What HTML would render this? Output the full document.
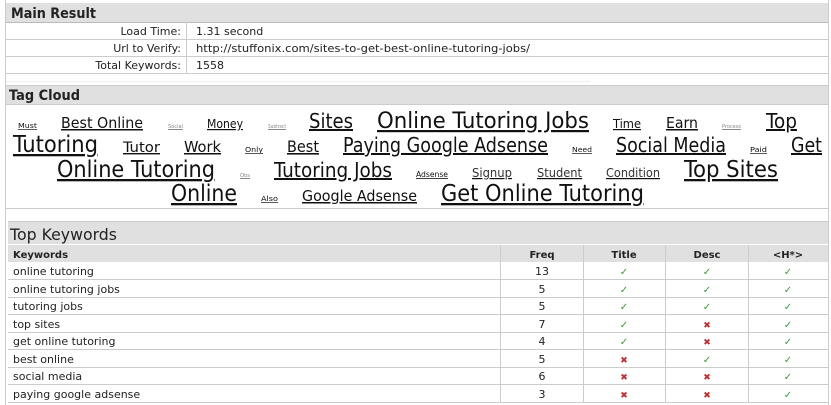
<!DOCTYPE html>
<html><head><meta charset="utf-8"><style>
html,body{margin:0;padding:0;background:#fff;width:831px;height:405px;overflow:hidden}
svg{display:block}
.v{font-family:"DejaVu Sans","Liberation Sans",sans-serif;fill:#222}
.c{font-family:"DejaVu Sans Condensed","DejaVu Sans","Liberation Sans",sans-serif;fill:#111}
</style></head><body>
<svg width="831" height="405" xmlns="http://www.w3.org/2000/svg">
<rect x="0" y="0" width="831" height="405" fill="#fff"/>
<line x1="5.5" y1="0" x2="5.5" y2="405" stroke="#ccc"/>
<line x1="828.5" y1="0" x2="828.5" y2="405" stroke="#ccc"/>
<!-- Main result -->
<rect x="6" y="3" width="822" height="19" fill="#e0e0e0"/>
<line x1="6" y1="22.5" x2="828" y2="22.5" stroke="#bbb"/>
<text x="11" y="18" class="v" font-size="14" font-weight="bold" textLength="85" lengthAdjust="spacingAndGlyphs">Main Result</text>
<line x1="6" y1="39.5" x2="828" y2="39.5" stroke="#ccc"/>
<line x1="6" y1="56.5" x2="828" y2="56.5" stroke="#ccc"/>
<line x1="6" y1="73.5" x2="828" y2="73.5" stroke="#ccc"/>
<line x1="186.5" y1="22" x2="186.5" y2="74" stroke="#ccc"/>
<g class="v" font-size="11">
<text x="181" y="35" text-anchor="end">Load Time:</text>
<text x="181" y="52" text-anchor="end">Url to Verify:</text>
<text x="181" y="69" text-anchor="end">Total Keywords:</text>
<text x="196" y="35">1.31 second</text>
<text x="196" y="52" textLength="334" lengthAdjust="spacingAndGlyphs">http://stuffonix.com/sites-to-get-best-online-tutoring-jobs/</text>
<text x="196" y="69">1558</text>
</g>
<line x1="6" y1="81.5" x2="590" y2="81.5" stroke="#eee"/>
<!-- Tag cloud -->
<rect x="6" y="85" width="822" height="19" fill="#e0e0e0"/>
<line x1="6" y1="85.5" x2="828" y2="85.5" stroke="#ccc"/>
<line x1="6" y1="104.5" x2="828" y2="104.5" stroke="#ccc"/>
<text x="9" y="100" class="v" font-size="14" font-weight="bold" textLength="71" lengthAdjust="spacingAndGlyphs">Tag Cloud</text>
<g class="c" text-decoration="underline">
<text x="18" y="128" font-size="7" textLength="19" lengthAdjust="spacingAndGlyphs">Must</text>
<text x="61" y="128" font-size="15" textLength="82" lengthAdjust="spacingAndGlyphs">Best Online</text>
<text x="168" y="128" font-size="5" fill="#888" textLength="15" lengthAdjust="spacingAndGlyphs">Social</text>
<text x="207" y="128" font-size="12" textLength="36" lengthAdjust="spacingAndGlyphs">Money</text>
<text x="268" y="128" font-size="5" fill="#888" textLength="18" lengthAdjust="spacingAndGlyphs">Subtract</text>
<text x="309" y="128" font-size="20" textLength="44" lengthAdjust="spacingAndGlyphs">Sites</text>
<text x="377" y="128" font-size="22" textLength="212" lengthAdjust="spacingAndGlyphs">Online Tutoring Jobs</text>
<text x="613" y="128" font-size="12" textLength="28" lengthAdjust="spacingAndGlyphs">Time</text>
<text x="666" y="128" font-size="15" textLength="32" lengthAdjust="spacingAndGlyphs">Earn</text>
<text x="722" y="128" font-size="5" fill="#888" textLength="19" lengthAdjust="spacingAndGlyphs">Process</text>
<text x="766" y="128" font-size="20" textLength="31" lengthAdjust="spacingAndGlyphs">Top</text>
<text x="13" y="152" font-size="23" textLength="85" lengthAdjust="spacingAndGlyphs">Tutoring</text>
<text x="123" y="152" font-size="14" textLength="37" lengthAdjust="spacingAndGlyphs">Tutor</text>
<text x="184" y="152" font-size="15" textLength="37" lengthAdjust="spacingAndGlyphs">Work</text>
<text x="245" y="152" font-size="7" textLength="18" lengthAdjust="spacingAndGlyphs">Only</text>
<text x="287" y="152" font-size="16" textLength="32" lengthAdjust="spacingAndGlyphs">Best</text>
<text x="343" y="152" font-size="20" textLength="205" lengthAdjust="spacingAndGlyphs">Paying Google Adsense</text>
<text x="572" y="152" font-size="7" textLength="20" lengthAdjust="spacingAndGlyphs">Need</text>
<text x="616" y="152" font-size="20" textLength="110" lengthAdjust="spacingAndGlyphs">Social Media</text>
<text x="750" y="152" font-size="7" textLength="17" lengthAdjust="spacingAndGlyphs">Paid</text>
<text x="791" y="152" font-size="20" textLength="31" lengthAdjust="spacingAndGlyphs">Get</text>
<text x="57" y="177" font-size="23" textLength="158" lengthAdjust="spacingAndGlyphs">Online Tutoring</text>
<text x="240" y="177" font-size="5" fill="#888" textLength="10" lengthAdjust="spacingAndGlyphs">Obs</text>
<text x="274" y="177" font-size="20" textLength="118" lengthAdjust="spacingAndGlyphs">Tutoring Jobs</text>
<text x="416" y="177" font-size="8" textLength="32" lengthAdjust="spacingAndGlyphs">Adsense</text>
<text x="472" y="177" font-size="12" fill="#333" textLength="40" lengthAdjust="spacingAndGlyphs">Signup</text>
<text x="537" y="177" font-size="12" fill="#333" textLength="45" lengthAdjust="spacingAndGlyphs">Student</text>
<text x="606" y="177" font-size="12" fill="#333" textLength="54" lengthAdjust="spacingAndGlyphs">Condition</text>
<text x="684" y="177" font-size="23" textLength="94" lengthAdjust="spacingAndGlyphs">Top Sites</text>
<text x="171" y="201" font-size="23" textLength="66" lengthAdjust="spacingAndGlyphs">Online</text>
<text x="261" y="201" font-size="7" textLength="17" lengthAdjust="spacingAndGlyphs">Also</text>
<text x="302" y="201" font-size="15" textLength="115" lengthAdjust="spacingAndGlyphs">Google Adsense</text>
<text x="441" y="201" font-size="23" textLength="203" lengthAdjust="spacingAndGlyphs">Get Online Tutoring</text>
</g>
<line x1="6" y1="208.5" x2="828" y2="208.5" stroke="#ccc"/>
<!-- Top keywords -->
<rect x="8" y="222" width="820" height="22" fill="#e0e0e0"/>
<line x1="8" y1="221.5" x2="828" y2="221.5" stroke="#ccc"/>
<text x="10" y="240" class="v" font-size="16" fill="#111" textLength="107" lengthAdjust="spacingAndGlyphs">Top Keywords</text>
<rect x="8" y="245" width="820" height="17" fill="#e0e0e0"/>
<line x1="8" y1="244.5" x2="828" y2="244.5" stroke="#fff"/>
<g stroke="#ccc">
<line x1="8" y1="279.5" x2="828" y2="279.5"/>
<line x1="8" y1="297.5" x2="828" y2="297.5"/>
<line x1="8" y1="314.5" x2="828" y2="314.5"/>
<line x1="8" y1="332.5" x2="828" y2="332.5"/>
<line x1="8" y1="349.5" x2="828" y2="349.5"/>
<line x1="8" y1="367.5" x2="828" y2="367.5"/>
<line x1="8" y1="384.5" x2="828" y2="384.5"/>
<line x1="8" y1="402.5" x2="828" y2="402.5"/>
<line x1="500.5" y1="245" x2="500.5" y2="403"/>
<line x1="583.5" y1="245" x2="583.5" y2="403"/>
<line x1="665.5" y1="245" x2="665.5" y2="403"/>
<line x1="748.5" y1="245" x2="748.5" y2="403"/>
</g>
<g class="v" font-size="10" font-weight="bold" fill="#222">
<text x="13" y="258">Keywords</text>
<text x="542" y="258" text-anchor="middle">Freq</text>
<text x="624" y="258" text-anchor="middle">Title</text>
<text x="707" y="258" text-anchor="middle">Desc</text>
<text x="788" y="258" text-anchor="middle">&lt;H*&gt;</text>
</g>
<g class="v" font-size="11" fill="#222">
<text x="13" y="275">online tutoring</text><text x="542" y="275" text-anchor="middle">13</text>
<text x="13" y="293">online tutoring jobs</text><text x="542" y="293" text-anchor="middle">5</text>
<text x="13" y="310">tutoring jobs</text><text x="542" y="310" text-anchor="middle">5</text>
<text x="13" y="328">top sites</text><text x="542" y="328" text-anchor="middle">7</text>
<text x="13" y="345">get online tutoring</text><text x="542" y="345" text-anchor="middle">4</text>
<text x="13" y="363">best online</text><text x="542" y="363" text-anchor="middle">5</text>
<text x="13" y="380">social media</text><text x="542" y="380" text-anchor="middle">6</text>
<text x="13" y="398">paying google adsense</text><text x="542" y="398" text-anchor="middle">3</text>
</g>
<g class="v" font-size="10" text-anchor="middle">
<g fill="#3a9a3a">
<text x="624" y="275">✓</text><text x="707" y="275">✓</text><text x="788" y="275">✓</text>
<text x="624" y="293">✓</text><text x="707" y="293">✓</text><text x="788" y="293">✓</text>
<text x="624" y="310">✓</text><text x="707" y="310">✓</text><text x="788" y="310">✓</text>
<text x="624" y="328">✓</text><text x="788" y="328">✓</text>
<text x="624" y="345">✓</text><text x="788" y="345">✓</text>
<text x="707" y="363">✓</text><text x="788" y="363">✓</text>
<text x="788" y="380">✓</text>
<text x="788" y="398">✓</text>
</g>
<g fill="#c03030" font-weight="bold" font-size="9">
<text x="707" y="328">✖</text>
<text x="707" y="345">✖</text>
<text x="624" y="363">✖</text>
<text x="624" y="380">✖</text><text x="707" y="380">✖</text>
<text x="624" y="398">✖</text><text x="707" y="398">✖</text>
</g>
</g>
</svg>
</body></html>
